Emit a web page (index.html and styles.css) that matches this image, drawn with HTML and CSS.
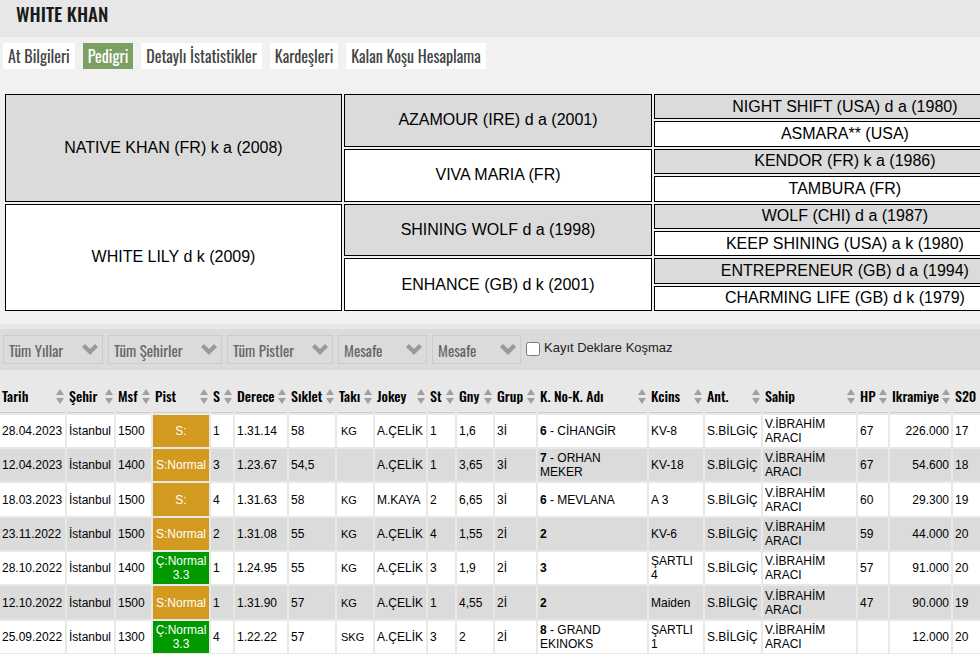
FILE: index.html
```html
<!DOCTYPE html>
<html lang="tr">
<head>
  <meta charset="UTF-8">
  <meta name="viewport" content="width=device-width, initial-scale=1.0">
  <title>WHITE KHAN - Pedigri</title>
  <link rel="stylesheet" href="styles.css">
</head>
<body>

  <!-- Horse name -->
  <header class="page-title">
    <h1>WHITE KHAN</h1>
  </header>

  <!-- Tabs -->
  <nav class="tabs">
    <a href="#bilgiler">At Bilgileri</a>
    <a href="#pedigri" class="active">Pedigri</a>
    <a href="#istatistik">Detaylı İstatistikler</a>
    <a href="#kardesler">Kardeşleri</a>
    <a href="#hesaplama">Kalan Koşu Hesaplama</a>
  </nav>

  <main class="viewport">
  <div class="content">

    <!-- Pedigree -->
    <table class="pedigree" id="pedigri">
      <colgroup>
        <col class="col-parent"><col class="col-grand"><col>
      </colgroup>
      <tbody>
        <tr>
          <td rowspan="4" class="sire">NATIVE KHAN (FR) k a (2008)</td>
          <td rowspan="2" class="sire">AZAMOUR (IRE) d a (2001)</td>
          <td class="sire">NIGHT SHIFT (USA) d a (1980)</td>
        </tr>
        <tr><td>ASMARA** (USA)</td></tr>
        <tr>
          <td rowspan="2">VIVA MARIA (FR)</td>
          <td class="sire">KENDOR (FR) k a (1986)</td>
        </tr>
        <tr><td>TAMBURA (FR)</td></tr>
        <tr>
          <td rowspan="4">WHITE LILY d k (2009)</td>
          <td rowspan="2" class="sire">SHINING WOLF d a (1998)</td>
          <td class="sire">WOLF (CHI) d a (1987)</td>
        </tr>
        <tr><td>KEEP SHINING (USA) a k (1980)</td></tr>
        <tr>
          <td rowspan="2">ENHANCE (GB) d k (2001)</td>
          <td class="sire">ENTREPRENEUR (GB) d a (1994)</td>
        </tr>
        <tr><td>CHARMING LIFE (GB) d k (1979)</td></tr>
      </tbody>
    </table>

    <section class="results">

      <!-- Filters -->
      <form class="filters">
        <select class="filter year" aria-label="Yıl"><option>Tüm Yıllar</option></select>
        <select class="filter city" aria-label="Şehir"><option>Tüm Şehirler</option></select>
        <select class="filter track" aria-label="Pist"><option>Tüm Pistler</option></select>
        <select class="filter distance" aria-label="En az mesafe"><option>Mesafe</option></select>
        <select class="filter distance" aria-label="En çok mesafe"><option>Mesafe</option></select>
        <label class="declare"><input type="checkbox"> <span>Kayıt Deklare Koşmaz</span></label>
      </form>

      <!-- Races -->
      <table class="races">
        <colgroup>
          <col class="c-tarih"><col class="c-sehir"><col class="c-msf"><col class="c-pist"><col class="c-s">
          <col class="c-derece"><col class="c-siklet"><col class="c-taki"><col class="c-jokey"><col class="c-st">
          <col class="c-gny"><col class="c-grup"><col class="c-kno"><col class="c-kcins"><col class="c-ant">
          <col class="c-sahip"><col class="c-hp"><col class="c-ikramiye"><col>
        </colgroup>
        <thead>
          <tr>
            <th>Tarih</th><th>Şehir</th><th>Msf</th><th>Pist</th><th>S</th>
            <th>Derece</th><th>Sıklet</th><th>Takı</th><th>Jokey</th><th>St</th>
            <th>Gny</th><th>Grup</th><th>K. No-K. Adı</th><th>Kcins</th><th>Ant.</th>
            <th>Sahip</th><th>HP</th><th>Ikramiye</th><th>S20</th>
          </tr>
        </thead>
        <tbody>
          <tr>
            <td>28.04.2023</td><td>İstanbul</td><td>1500</td><td class="kum">S:</td><td>1</td>
            <td>1.31.14</td><td>58</td><td class="taki">KG</td><td>A.ÇELİK</td><td>1</td>
            <td>1,6</td><td>3İ</td><td><b>6</b> - CİHANGİR</td><td>KV-8</td><td>S.BİLGİÇ</td>
            <td>V.İBRAHİM<br>ARACI</td><td>67</td><td class="money">226.000</td><td>17</td>
          </tr>
          <tr>
            <td>12.04.2023</td><td>İstanbul</td><td>1400</td><td class="kum">S:Normal</td><td>3</td>
            <td>1.23.67</td><td>54,5</td><td class="taki"></td><td>A.ÇELİK</td><td>1</td>
            <td>3,65</td><td>3İ</td><td><b>7</b> - ORHAN<br>MEKER</td><td>KV-18</td><td>S.BİLGİÇ</td>
            <td>V.İBRAHİM<br>ARACI</td><td>67</td><td class="money">54.600</td><td>18</td>
          </tr>
          <tr>
            <td>18.03.2023</td><td>İstanbul</td><td>1500</td><td class="kum">S:</td><td>4</td>
            <td>1.31.63</td><td>58</td><td class="taki">KG</td><td>M.KAYA</td><td>2</td>
            <td>6,65</td><td>3İ</td><td><b>6</b> - MEVLANA</td><td>A 3</td><td>S.BİLGİÇ</td>
            <td>V.İBRAHİM<br>ARACI</td><td>60</td><td class="money">29.300</td><td>19</td>
          </tr>
          <tr>
            <td>23.11.2022</td><td>İstanbul</td><td>1500</td><td class="kum">S:Normal</td><td>2</td>
            <td>1.31.08</td><td>55</td><td class="taki">KG</td><td>A.ÇELİK</td><td>4</td>
            <td>1,55</td><td>2İ</td><td><b>2</b></td><td>KV-6</td><td>S.BİLGİÇ</td>
            <td>V.İBRAHİM<br>ARACI</td><td>59</td><td class="money">44.000</td><td>20</td>
          </tr>
          <tr>
            <td>28.10.2022</td><td>İstanbul</td><td>1400</td><td class="cim">Ç:Normal<br>3.3</td><td>1</td>
            <td>1.24.95</td><td>55</td><td class="taki">KG</td><td>A.ÇELİK</td><td>3</td>
            <td>1,9</td><td>2İ</td><td><b>3</b></td><td>ŞARTLI<br>4</td><td>S.BİLGİÇ</td>
            <td>V.İBRAHİM<br>ARACI</td><td>57</td><td class="money">91.000</td><td>20</td>
          </tr>
          <tr>
            <td>12.10.2022</td><td>İstanbul</td><td>1500</td><td class="kum">S:Normal</td><td>1</td>
            <td>1.31.90</td><td>57</td><td class="taki">KG</td><td>A.ÇELİK</td><td>1</td>
            <td>4,55</td><td>2İ</td><td><b>2</b></td><td>Maiden</td><td>S.BİLGİÇ</td>
            <td>V.İBRAHİM<br>ARACI</td><td>47</td><td class="money">90.000</td><td>19</td>
          </tr>
          <tr>
            <td>25.09.2022</td><td>İstanbul</td><td>1300</td><td class="cim">Ç:Normal<br>3.3</td><td>4</td>
            <td>1.22.22</td><td>57</td><td class="taki">SKG</td><td>A.ÇELİK</td><td>3</td>
            <td>2</td><td>2İ</td><td><b>8</b> - GRAND<br>EKINOKS</td><td>ŞARTLI<br>1</td><td>S.BİLGİÇ</td>
            <td>V.İBRAHİM<br>ARACI</td><td></td><td class="money">12.000</td><td>20</td>
          </tr>
        </tbody>
      </table>
    </section>
  </div>
  </main>

</body>
</html>
```
FILE: styles.css
```css
* {
  box-sizing: border-box;
}

body {
  margin: 0;
  font-family: "Liberation Sans", Arial, sans-serif;
  font-size: 12px;
  color: #000;
  background-color: #f1f1f1;
  overflow: hidden;
}

/* Title */
.page-title {
  height: 37px;
  padding: 0 16px;
  background-color: #e7e7e7;
}

.page-title h1 {
  margin: 0;
  font-family: "Oswald", "Liberation Sans Narrow", "Liberation Sans", sans-serif;
  font-size: 19px;
  font-weight: 500;
  line-height: 26px;
  color: #1a1a1a;
}

/* Tabs */
.tabs {
  display: flex;
  gap: 8px;
  padding: 6px 3px;
}

.tabs a {
  padding: 0 5px;
  font-family: "Oswald", "Liberation Sans Narrow", "Liberation Sans", sans-serif;
  font-size: 16px;
  line-height: 26px;
  color: #444;
  background-color: #fff;
  text-decoration: none;
  white-space: nowrap;
}

.tabs a.active {
  color: #fff;
  background-color: #7d9f64;
}

/* Wide tables run past the right edge */
.viewport {
  overflow: hidden;
}

.content {
  width: 106%;
}

/* Pedigree */
.pedigree {
  width: calc(100% - 4px);
  height: 221px;
  margin: 17px 0 11px 3px;
  border-spacing: 2px;
  table-layout: fixed;
  font-size: 16px;
}

.pedigree td {
  padding: 0;
  border: 1px solid #000;
  background-color: #fff;
  text-align: center;
  line-height: 18px;
}

.pedigree td.sire {
  background-color: #dbdbdb;
}

.col-parent {
  width: 337px;
}

.col-grand {
  width: 308px;
}

/* Results */
.results {
  padding-top: 5px;
  background-color: #e8e8e8;
}

.filters {
  display: flex;
  gap: 5px;
  padding: 6px 3px;
  background-color: #dbdbdb;
}

.filter {
  height: 29px;
  padding: 0 5px;
  border: 1px solid #ccc;
  border-radius: 0;
  appearance: none;
  font-family: "Oswald", "Liberation Sans Narrow", "Liberation Sans", sans-serif;
  font-size: 15px;
  color: #666;
  background: url("data:image/svg+xml,%3Csvg xmlns='http://www.w3.org/2000/svg' width='16' height='11'%3E%3Cpath d='M0 3 L3 0 L8 5 L13 0 L16 3 L8 11 Z' fill='%23999'/%3E%3C/svg%3E") no-repeat right 4px center;
}

.year {
  width: 100px;
}

.city {
  width: 114px;
}

.track {
  width: 106px;
}

.distance {
  width: 89px;
}

.declare {
  display: flex;
  gap: 4px;
  font-size: 13px;
  line-height: 25px;
  color: #222;
}

.declare input {
  width: 14px;
  height: 14px;
  margin: 7px 0 0;
}

/* Race table */
.races {
  width: 100%;
  margin-left: -2px;
  border-spacing: 2px;
  table-layout: fixed;
}

.races th {
  height: 41px;
  padding: 7px 2px 0;
  border-bottom: 1px solid #ccc;
  font-family: "Oswald", "Liberation Sans Narrow", "Liberation Sans", sans-serif;
  font-size: 14px;
  font-weight: 500;
  text-align: left;
  white-space: nowrap;
  background: url("data:image/svg+xml,%3Csvg xmlns='http://www.w3.org/2000/svg' width='8' height='15'%3E%3Cpath d='M0 6 L4 0 L8 6 Z M0 9 L8 9 L4 15 Z' fill='%23a0a0a0'/%3E%3C/svg%3E") no-repeat right 1px bottom 8px;
}

.races th:last-child {
  background: none;
}

.races td {
  height: 32px;
  padding: 0 2px;
  line-height: 14px;
  white-space: nowrap;
  background-color: #fff;
}

.races tr:nth-child(3n) td {
  height: 33px;
}

.races tr:nth-child(even) td {
  background-color: #dbdbdb;
}

.races td.kum,
.races td.cim {
  color: #fff;
  text-align: center;
}

.races tr td.kum,
.races tr:nth-child(even) td.kum {
  background-color: #d29a1e;
}

.races tr td.cim {
  background-color: #009900;
}

.races td.taki {
  padding-left: 4px;
  font-size: 11px;
}

.races td.money {
  text-align: right;
}

.c-tarih { width: 65px; }
.c-sehir { width: 47px; }
.c-msf { width: 35px; }
.c-pist { width: 56px; }
.c-s { width: 22px; }
.c-derece { width: 52px; }
.c-siklet { width: 46px; }
.c-taki { width: 36px; }
.c-jokey { width: 51px; }
.c-st { width: 27px; }
.c-gny { width: 36px; }
.c-grup { width: 41px; }
.c-kno { width: 109px; }
.c-kcins { width: 54px; }
.c-ant { width: 56px; }
.c-sahip { width: 93px; }
.c-hp { width: 30px; }
.c-ikramiye { width: 61px; }
```
